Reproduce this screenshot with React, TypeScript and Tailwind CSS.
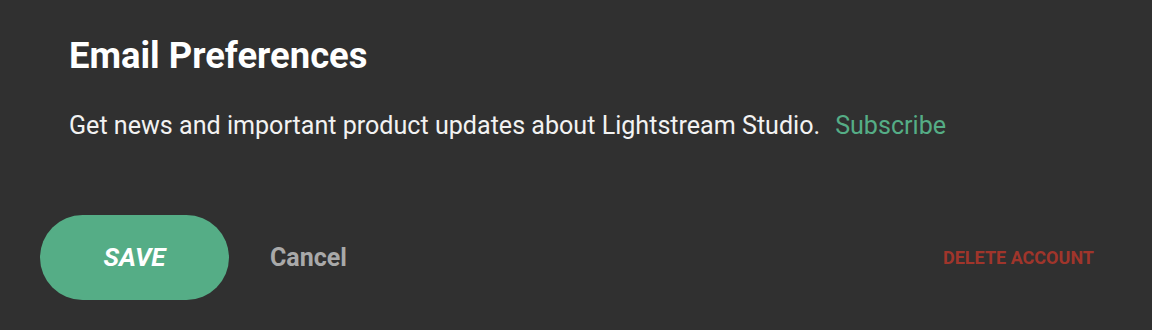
export default function App() {
  return (
    <div
      className="w-[1152px] h-[330px] bg-[#303030] flex flex-col"
      style={{ fontFamily: "Roboto, 'Noto Sans', sans-serif" }}
    >
      <div className="pl-[69px] pt-[36px]">
        <h1 className="text-[36.4px] leading-[40px] font-bold text-white">Email Preferences</h1>
        <p className="mt-[35px] text-[25.1px] leading-[30px] text-[#f2f2f2]">
          Get news and important product updates about Lightstream Studio.
          <span className="ml-[15px] text-[#55ad86]">Subscribe</span>
        </p>
      </div>
      <div className="mt-[74px] pl-[40px] pr-[58px] flex items-center">
        <button className="w-[189px] h-[85px] rounded-full bg-[#55ad86] text-white text-[26px] font-bold italic">
          SAVE
        </button>
        <button className="ml-[41px] text-[25px] font-bold text-[#a9a9a9]">Cancel</button>
        <div className="flex-1" />
        <button className="text-[18px] font-bold text-[#a0352b]">DELETE ACCOUNT</button>
      </div>
    </div>
  );
}
